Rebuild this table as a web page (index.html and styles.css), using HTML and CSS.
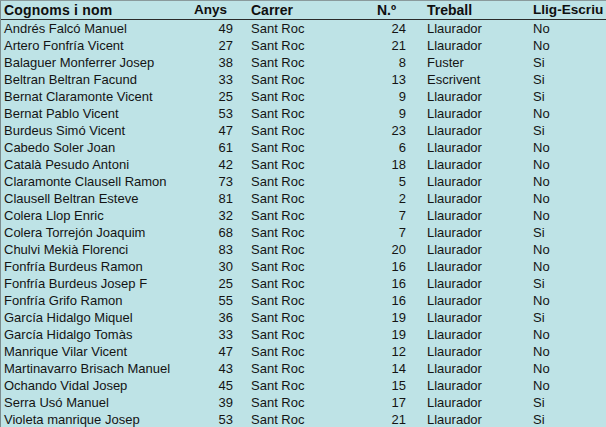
FILE: index.html
```html
<!DOCTYPE html>
<html>
<head>
<meta charset="utf-8">
<link rel="stylesheet" href="styles.css">
</head>
<body>
<div class="sheet">
  <div class="row head">
    <div class="c name">Cognoms i nom</div>
    <div class="c age">Anys</div>
    <div class="c street">Carrer</div>
    <div class="c num">N.º</div>
    <div class="c job">Treball</div>
    <div class="c lit">Llig-Escriu</div>
  </div>
  <div class="row"><div class="c name">Andrés Falcó Manuel</div><div class="c age">49</div><div class="c street">Sant Roc</div><div class="c num">24</div><div class="c job">Llaurador</div><div class="c lit">No</div></div>
  <div class="row"><div class="c name">Artero Fonfría Vicent</div><div class="c age">27</div><div class="c street">Sant Roc</div><div class="c num">21</div><div class="c job">Llaurador</div><div class="c lit">No</div></div>
  <div class="row"><div class="c name">Balaguer Monferrer Josep</div><div class="c age">38</div><div class="c street">Sant Roc</div><div class="c num">8</div><div class="c job">Fuster</div><div class="c lit">Si</div></div>
  <div class="row"><div class="c name">Beltran Beltran Facund</div><div class="c age">33</div><div class="c street">Sant Roc</div><div class="c num">13</div><div class="c job">Escrivent</div><div class="c lit">Si</div></div>
  <div class="row"><div class="c name">Bernat Claramonte Vicent</div><div class="c age">25</div><div class="c street">Sant Roc</div><div class="c num">9</div><div class="c job">Llaurador</div><div class="c lit">Si</div></div>
  <div class="row"><div class="c name">Bernat Pablo Vicent</div><div class="c age">53</div><div class="c street">Sant Roc</div><div class="c num">9</div><div class="c job">Llaurador</div><div class="c lit">No</div></div>
  <div class="row"><div class="c name">Burdeus Simó Vicent</div><div class="c age">47</div><div class="c street">Sant Roc</div><div class="c num">23</div><div class="c job">Llaurador</div><div class="c lit">Si</div></div>
  <div class="row"><div class="c name">Cabedo Soler Joan</div><div class="c age">61</div><div class="c street">Sant Roc</div><div class="c num">6</div><div class="c job">Llaurador</div><div class="c lit">No</div></div>
  <div class="row"><div class="c name">Català Pesudo Antoni</div><div class="c age">42</div><div class="c street">Sant Roc</div><div class="c num">18</div><div class="c job">Llaurador</div><div class="c lit">No</div></div>
  <div class="row"><div class="c name">Claramonte Clausell Ramon</div><div class="c age">73</div><div class="c street">Sant Roc</div><div class="c num">5</div><div class="c job">Llaurador</div><div class="c lit">No</div></div>
  <div class="row"><div class="c name">Clausell Beltran Esteve</div><div class="c age">81</div><div class="c street">Sant Roc</div><div class="c num">2</div><div class="c job">Llaurador</div><div class="c lit">No</div></div>
  <div class="row"><div class="c name">Colera Llop Enric</div><div class="c age">32</div><div class="c street">Sant Roc</div><div class="c num">7</div><div class="c job">Llaurador</div><div class="c lit">No</div></div>
  <div class="row"><div class="c name">Colera Torrejón Joaquim</div><div class="c age">68</div><div class="c street">Sant Roc</div><div class="c num">7</div><div class="c job">Llaurador</div><div class="c lit">Si</div></div>
  <div class="row"><div class="c name">Chulvi Mekià Florenci</div><div class="c age">83</div><div class="c street">Sant Roc</div><div class="c num">20</div><div class="c job">Llaurador</div><div class="c lit">No</div></div>
  <div class="row"><div class="c name">Fonfría Burdeus Ramon</div><div class="c age">30</div><div class="c street">Sant Roc</div><div class="c num">16</div><div class="c job">Llaurador</div><div class="c lit">No</div></div>
  <div class="row"><div class="c name">Fonfría Burdeus Josep F</div><div class="c age">25</div><div class="c street">Sant Roc</div><div class="c num">16</div><div class="c job">Llaurador</div><div class="c lit">Si</div></div>
  <div class="row"><div class="c name">Fonfría Grifo Ramon</div><div class="c age">55</div><div class="c street">Sant Roc</div><div class="c num">16</div><div class="c job">Llaurador</div><div class="c lit">No</div></div>
  <div class="row"><div class="c name">García Hidalgo Miquel</div><div class="c age">36</div><div class="c street">Sant Roc</div><div class="c num">19</div><div class="c job">Llaurador</div><div class="c lit">Si</div></div>
  <div class="row"><div class="c name">García Hidalgo Tomàs</div><div class="c age">33</div><div class="c street">Sant Roc</div><div class="c num">19</div><div class="c job">Llaurador</div><div class="c lit">No</div></div>
  <div class="row"><div class="c name">Manrique Vilar Vicent</div><div class="c age">47</div><div class="c street">Sant Roc</div><div class="c num">12</div><div class="c job">Llaurador</div><div class="c lit">No</div></div>
  <div class="row"><div class="c name">Martinavarro Brisach Manuel</div><div class="c age">43</div><div class="c street">Sant Roc</div><div class="c num">14</div><div class="c job">Llaurador</div><div class="c lit">No</div></div>
  <div class="row"><div class="c name">Ochando Vidal Josep</div><div class="c age">45</div><div class="c street">Sant Roc</div><div class="c num">15</div><div class="c job">Llaurador</div><div class="c lit">No</div></div>
  <div class="row"><div class="c name">Serra Usó Manuel</div><div class="c age">39</div><div class="c street">Sant Roc</div><div class="c num">17</div><div class="c job">Llaurador</div><div class="c lit">Si</div></div>
  <div class="row"><div class="c name">Violeta manrique Josep</div><div class="c age">53</div><div class="c street">Sant Roc</div><div class="c num">21</div><div class="c job">Llaurador</div><div class="c lit">Si</div></div>
</div>
</body>
</html>
```

FILE: styles.css
```css
html, body {
  margin: 0;
  padding: 0;
  background: #bee3e6;
  overflow: hidden;
}
.sheet {
  width: 606px;
  height: 427px;
  box-sizing: border-box;
  background: #bee3e6;
  border-top: 1px solid #8a9a9c;
  border-left: 1px solid #7d8c8e;
  font-family: "Liberation Sans", Arial, sans-serif;
  color: #141414;
  overflow: hidden;
}
.row {
  display: grid;
  grid-template-columns: 188px 58px 120px 55px 105px 1fr;
  height: 17px;
  font-size: 13px;
  line-height: 17px;
}
.c {
  white-space: nowrap;
  overflow: hidden;
}
.name { padding-left: 3px; }
.age { text-align: right; padding-right: 14px; }
.street { padding-left: 4px; }
.num { text-align: right; padding-right: 16px; }
.job { padding-left: 5px; }
.lit { padding-left: 6px; overflow: visible; }

.head {
  height: 18px;
  line-height: 18px;
  font-size: 14px;
  font-weight: bold;
  border-bottom: 1px solid #2a2a2a;
  color: #0f0f0f;
}
.head .name { letter-spacing: 0.2px; }
.head .age { padding-right: 20px; font-size: 13.5px; }
.head .num { padding-right: 26px; }
.head .lit { font-size: 13.6px; }
```
